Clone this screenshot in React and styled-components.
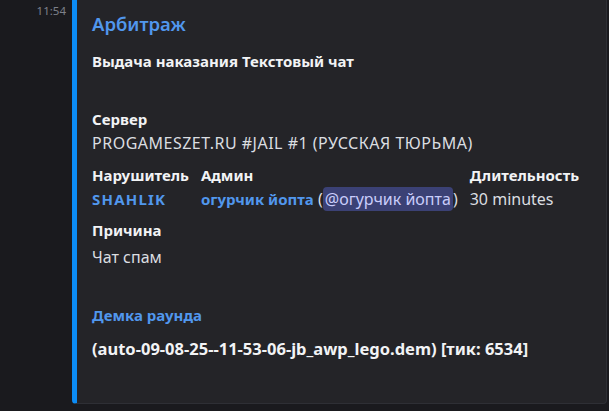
import styled, { createGlobalStyle } from "styled-components";

const Global = createGlobalStyle`
    html, body {
        margin: 0;
        padding: 0;
        background: #1a1a1e;
    }
    body {
        font-family: "Noto Sans", "Liberation Sans", sans-serif;
        color: #dbdee1;
        overflow: hidden;
    }
`;

const Message = styled.div`
    display: flex;
    width: 609px;
    height: 411px;
`;

const Gutter = styled.div`
    width: 72px;
    flex-shrink: 0;
    padding: 3px 6px 0 0;
    box-sizing: border-box;
    text-align: right;
    font-size: 11.5px;
    line-height: 16px;
    color: #7d808a;
`;

const Embed = styled.div`
    width: 535px;
    height: 410px;
    margin-top: -6px;
    box-sizing: border-box;
    background: #242428;
    border: 1px solid #2e2f35;
    border-left: 5px solid #0c8cf5;
    border-radius: 4px;
    padding: 17px 16px 20px 15px;
    display: flex;
    flex-direction: column;
`;

const Title = styled.div`
    font-size: 18.5px;
    line-height: 24px;
    font-weight: 600;
    color: #5197ed;
`;

const Bold = styled.div`
    font-size: ${(p) => p.$size || 15}px;
    line-height: 24px;
    font-weight: 700;
    color: ${(p) => (p.$link ? "#5197ed" : "#f2f3f5")};
    margin-top: ${(p) => p.$gap || 0}px;
    white-space: nowrap;
`;

const Value = styled.div`
    font-size: 16px;
    line-height: 24px;
    color: #dbdee1;
    white-space: nowrap;
    letter-spacing: ${(p) => p.$spread || 0}px;
    margin-top: ${(p) => p.$gap || 0}px;
`;

const Fields = styled.div`
    display: grid;
    grid-template-columns: auto auto auto;
    justify-content: start;
    column-gap: 12px;
    margin-top: 8px;
`;

const Link = styled.span`
    font-size: 15px;
    font-weight: 700;
    color: #5197ed;
    letter-spacing: ${(p) => p.$spread || 0}px;
`;

const Mention = styled.span`
    background: #3b4175;
    color: #c9cdfb;
    border-radius: 4px;
    padding: 1px 2px;
`;

export default function App() {
    return (
        <Message>
            <Global />
            <Gutter>11:54</Gutter>
            <Embed>
                <Title>Арбитраж</Title>
                <Bold $gap={13}>Выдача наказания Текстовый чат</Bold>
                <Bold $gap={34}>Сервер</Bold>
                <Value $spread={0.5}>PROGAMESZET.RU #JAIL #1 (РУССКАЯ ТЮРЬМА)</Value>
                <Fields>
                    <Bold>Нарушитель</Bold>
                    <Bold>Админ</Bold>
                    <Bold>Длительность</Bold>
                    <Value>
                        <Link $spread={1.2}>SHAHLIK</Link>
                    </Value>
                    <Value>
                        <Link>огурчик йопта</Link> (<Mention>@огурчик йопта</Mention>)
                    </Value>
                    <Value>30 minutes</Value>
                </Fields>
                <Bold $gap={7}>Причина</Bold>
                <Value $gap={3}>Чат спам</Value>
                <Bold $link $gap={34}>Демка раунда</Bold>
                <Bold $size={16.5} $gap={10}>(auto-09-08-25--11-53-06-jb_awp_lego.dem) [тик: 6534]</Bold>
            </Embed>
        </Message>
    );
}
